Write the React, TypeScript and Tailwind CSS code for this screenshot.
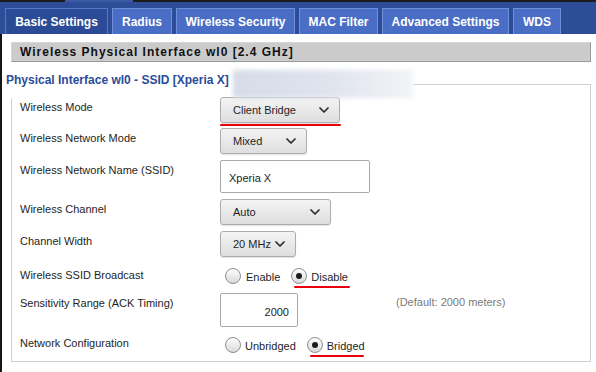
import React from "react";

const tabs = [
  { name: "Basic Settings", w: "w-[103px]", active: true },
  { name: "Radius", w: "w-[60px]", active: false },
  { name: "Wireless Security", w: "w-[119px]", active: false },
  { name: "MAC Filter", w: "w-[79px]", active: false },
  { name: "Advanced Settings", w: "w-[127px]", active: false },
  { name: "WDS", w: "w-[48px]", active: false },
];

const Chevron = () => (
  <svg width="10" height="6" viewBox="0 0 10 6" className="shrink-0">
    <path d="M1 1 L5 5 L9 1" fill="none" stroke="#2b2b2b" strokeWidth="1.7" strokeLinecap="round" strokeLinejoin="round" />
  </svg>
);

const Select = ({ value, w }: { value: string; w: string }) => (
  <div
    className={`${w} h-[26px] flex items-center justify-between pl-[12px] pr-[10px] whitespace-nowrap rounded-[3px] border border-[#adadad] bg-gradient-to-b from-[#f4f4f4] to-[#dedede] text-[11px] text-[#1e1e1e] shadow-[0_1px_1px_rgba(0,0,0,0.12)]`}
  >
    <span>{value}</span>
    <Chevron />
  </div>
);

const Radio = ({ label, checked, gap }: { label: string; checked?: boolean; gap: string }) => (
  <div className={`flex items-center ${gap}`}>
    <span className="w-[16px] h-[16px] rounded-full border border-[#8e8e8e] bg-gradient-to-b from-white to-[#d9d9d9] flex items-center justify-center">
      {checked && <span className="w-[6px] h-[6px] rounded-full bg-[#1c1c1c]" />}
    </span>
    <span className="text-[11px] leading-[16px] pt-[2px] text-[#1e1e1e]">{label}</span>
  </div>
);

const Row = ({ label, h, children }: { label: string; h: string; children: React.ReactNode }) => (
  <div className={`flex items-start ${h}`}>
    <div className="w-[200px] shrink-0 pt-[2px] text-[11px] leading-[16px] text-[#1e1e1e]">{label}</div>
    {children}
  </div>
);

export default function App() {
  return (
    <div className="w-[596px] h-[372px] overflow-hidden bg-white font-['Liberation_Sans',Arial,sans-serif]">
      {/* header with tabs */}
      <div className="h-[34px] bg-[#2d4d99] flex flex-col">
        <div className="h-[2px] flex">
          <div className="w-[65px] bg-[#1c1c1c]" />
          <div className="w-[68px] bg-[#3a5aa6]" />
          <div className="flex-1 bg-[#1c1c1c]" />
        </div>
        <div className="flex gap-[4px] pl-[5px] pt-[6px] flex-1">
          {tabs.map((t) => (
            <div
              key={t.name}
              className={`${t.w} h-full flex items-center justify-center border border-b-0 text-[12px] font-bold text-white ${
                t.active ? "bg-[#2b4b96] border-[#5577c4]" : "bg-[#4a6ec6] border-[#6f8fd8]"
              }`}
            >
              {t.name}
            </div>
          ))}
        </div>
      </div>

      <div className="h-[338px] border-l-2 border-[#161616] pt-[8px]">
        <div className="ml-[9px] w-[580px] h-[20px] bg-[#cbcbcb] border border-[#d6d6d6] border-b-[#9a9a9a] border-r-[#9a9a9a] pl-[8px] flex items-center text-[12px] font-bold tracking-[1px] text-[#111]">
          Wireless Physical Interface wl0 [2.4 GHz]
        </div>

        <fieldset className="mt-[8px] ml-[9px] w-[580px] border border-[#cfcfcf] p-0 m-0">
          <legend className="-ml-[6px] p-0">
            <div className="flex items-start h-[28px]">
              <span className="pt-[2px] leading-[16px] text-[12px] font-bold text-[#2a4c9a]">
                Physical Interface wl0 - SSID [Xperia X]
              </span>
              <span className="ml-[4px] w-[180px] h-[28px] bg-gradient-to-r from-[#d6dce9] via-[#dfe3ed] to-[#f2f4f8] blur-[2px]" />
            </div>
          </legend>

          <div className="-mt-[1px] pl-[8px] flex flex-col">
            <Row label="Wireless Mode" h="h-[31px]">
              <div className="flex flex-col">
                <Select value="Client Bridge" w="w-[120px]" />
                <div className="mt-[1px] w-[121px] h-[2px] rounded-full bg-[#e8000b]" />
              </div>
            </Row>
            <Row label="Wireless Network Mode" h="h-[32px]">
              <Select value="Mixed" w="w-[87px]" />
            </Row>
            <Row label="Wireless Network Name (SSID)" h="h-[39px]">
              <input
                readOnly
                defaultValue="Xperia X"
                className="w-[150px] h-[33px] border border-[#a9a9a9] rounded-[2px] pl-[8px] pt-[3px] text-[11px] text-[#1e1e1e] outline-none"
              />
            </Row>
            <Row label="Wireless Channel" h="h-[32px]">
              <Select value="Auto" w="w-[111px]" />
            </Row>
            <Row label="Channel Width" h="h-[34px]">
              <Select value="20 MHz" w="w-[76px]" />
            </Row>
            <Row label="Wireless SSID Broadcast" h="h-[28px]">
              <div className="pt-[2px] pl-[5px] flex items-start gap-[11px]">
                <Radio label="Enable" gap="gap-[5px]" />
                <div className="flex flex-col">
                  <Radio label="Disable" checked gap="gap-[4px]" />
                  <div className="mt-[1px] ml-[3px] w-[56px] h-[2px] rounded-full bg-[#e8000b]" />
                </div>
              </div>
            </Row>
            <Row label="Sensitivity Range (ACK Timing)" h="h-[40px]">
              <div className="w-[176px] shrink-0">
                <input
                  readOnly
                  defaultValue="2000"
                  className="w-[78px] h-[34px] border border-[#a9a9a9] rounded-[2px] pr-[8px] pt-[3px] text-right text-[11px] text-[#1e1e1e] outline-none"
                />
              </div>
              <div className="pt-[1px] text-[11px] leading-[16px] text-[#7a7a7a]">(Default: 2000 meters)</div>
            </Row>
            <Row label="Network Configuration" h="h-[28px]">
              <div className="pt-[3px] pl-[5px] flex items-start gap-[11px]">
                <Radio label="Unbridged" gap="gap-[4px]" />
                <div className="flex flex-col">
                  <Radio label="Bridged" checked gap="gap-[4px]" />
                  <div className="mt-[1px] ml-[3px] w-[54px] h-[2px] rounded-full bg-[#e8000b]" />
                </div>
              </div>
            </Row>
          </div>
        </fieldset>
      </div>
    </div>
  );
}
